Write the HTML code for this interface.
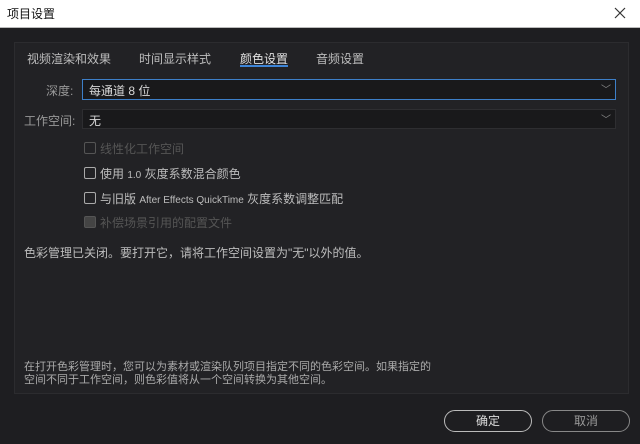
<html><head><style>
html,body{margin:0;width:640px;height:444px;overflow:hidden}
body{background:#1e1e21;font-family:"Liberation Sans","Noto Sans CJK SC",sans-serif;font-size:12px;color:#bdbdbd;position:relative}
.t{position:absolute;white-space:nowrap}
.title{position:absolute;left:0;top:0;width:640px;height:27px;background:#fff;border-bottom:1px solid #bbb}
.panel{position:absolute;left:14px;top:42px;width:613px;height:350px;background:#222225;border:1px solid #2c2c2f}
.dd{position:absolute;background:#19191b;border:1px solid #2e2e31;color:#d8d8d8}
.cb{position:absolute;width:10px;height:10px;border:1px solid #aaa;border-radius:2px}
.btn{position:absolute;height:20px;border:1px solid #aaa;border-radius:11px;text-align:center;line-height:20px}
</style></head><body>
<div class="title"><span class="t" style="left:7px;top:5px;color:#111;font-size:12px">项目设置</span>
<svg style="position:absolute;left:614px;top:7px" width="12" height="12"><path d="M1 1L11 11M11 1L1 11" stroke="#333" stroke-width="1.2"/></svg></div>
<div class="panel"></div>
<span class="t" style="left:27px;top:50px">视频渲染和效果</span>
<span class="t" style="left:139px;top:50px">时间显示样式</span>
<span class="t" style="left:240px;top:50px;color:#e0e0e0">颜色设置</span>
<div style="position:absolute;left:240px;top:65px;width:48px;height:2px;background:#3d84d6"></div>
<span class="t" style="left:316px;top:50px">音频设置</span>
<span class="t" style="left:46px;top:82px;color:#999">深度:</span>
<div class="dd" style="left:82px;top:79px;width:532px;height:19px;border-color:#3d7fc8"><span class="t" style="left:6px;top:2px">每通道 8 位</span><span class="t" style="right:4px;top:1px;color:#888;font-size:10px">﹀</span></div>
<span class="t" style="left:24px;top:112px;color:#999">工作空间:</span>
<div class="dd" style="left:82px;top:109px;width:532px;height:18px"><span class="t" style="left:6px;top:2px">无</span><span class="t" style="right:4px;top:1px;color:#888;font-size:10px">﹀</span></div>
<div class="cb" style="left:84px;top:142px;border-color:#555"></div><span class="t" style="left:100px;top:140px;color:#555">线性化工作空间</span>
<div class="cb" style="left:84px;top:167px"></div><span class="t" style="left:100px;top:165px">使用 <span style="font-size:10px">1.0</span> 灰度系数混合颜色</span>
<div class="cb" style="left:84px;top:192px"></div><span class="t" style="left:100px;top:190px">与旧版 <span style="font-size:10px">After Effects QuickTime</span> 灰度系数调整匹配</span>
<div class="cb" style="left:84px;top:216px;border-color:#555;background:#444"></div><span class="t" style="left:100px;top:214px;color:#555">补偿场景引用的配置文件</span>
<span class="t" style="left:24px;top:244px">色彩管理已关闭。要打开它，请将工作空间设置为"无"以外的值。</span>
<span class="t" style="left:24px;top:361px;font-size:11px;color:#aaa;line-height:13px">在打开色彩管理时，您可以为素材或渲染队列项目指定不同的色彩空间。如果指定的<br>空间不同于工作空间，则色彩值将从一个空间转换为其他空间。</span>
<div class="btn" style="left:444px;top:410px;width:86px;color:#ddd;border-color:#bbb">确定</div>
<div class="btn" style="left:542px;top:410px;width:86px;color:#999;border-color:#888">取消</div>
</body></html>
